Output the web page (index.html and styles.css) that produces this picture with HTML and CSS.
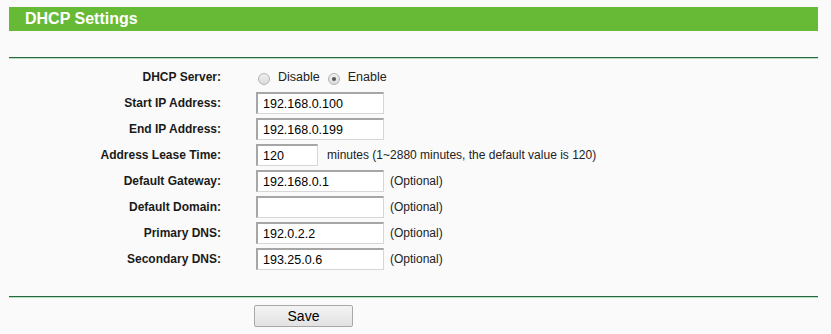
FILE: index.html
```html
<!DOCTYPE html>
<html lang="en">
<head>
    <meta charset="UTF-8">
    <title>DHCP Settings</title>
    <link rel="stylesheet" href="styles.css">
</head>
<body>
    <div class="page">
        <div class="title-bar">DHCP Settings</div>
        <div class="rule"></div>
        <div class="form">
            <div class="label">DHCP Server:</div>
            <div class="value radios">
                <label><input type="radio" name="dhcp"> Disable</label>
                <label><input type="radio" name="dhcp" checked> Enable</label>
            </div>

            <div class="label">Start IP Address:</div>
            <div class="value"><input class="text" type="text" value="192.168.0.100"></div>

            <div class="label">End IP Address:</div>
            <div class="value"><input class="text" type="text" value="192.168.0.199"></div>

            <div class="label">Address Lease Time:</div>
            <div class="value"><input class="text short" type="text" value="120"><span class="note wide">minutes (1~2880 minutes, the default value is 120)</span></div>

            <div class="label">Default Gateway:</div>
            <div class="value"><input class="text" type="text" value="192.168.0.1"><span class="note">(Optional)</span></div>

            <div class="label">Default Domain:</div>
            <div class="value"><input class="text" type="text" value=""><span class="note">(Optional)</span></div>

            <div class="label">Primary DNS:</div>
            <div class="value"><input class="text" type="text" value="192.0.2.2"><span class="note">(Optional)</span></div>

            <div class="label">Secondary DNS:</div>
            <div class="value"><input class="text" type="text" value="193.25.0.6"><span class="note">(Optional)</span></div>
        </div>
        <div class="rule bottom"></div>
        <div class="actions">
            <button class="btn">Save</button>
        </div>
    </div>
</body>
</html>
```

FILE: styles.css
```css
body {
    margin: 0;
    background: #fafafa;
    font-family: 'Liberation Sans', Arial, sans-serif;
    font-size: 12px;
    color: #000;
}
.page {
    padding: 7px 13px 0 9px;
}
.title-bar {
    height: 24px;
    line-height: 24px;
    background: #67ba35;
    color: #fff;
    font-size: 16px;
    font-weight: bold;
    padding-left: 16px;
}
.rule {
    margin-top: 26px;
    height: 1px;
    background: #24693f;
    border-bottom: 1px solid #b9ddc3;
}
.rule.bottom {
    margin-top: 24px;
}
.form {
    display: grid;
    grid-template-columns: 212px 1fr;
    column-gap: 35px;
    margin-top: 5px;
}
.label {
    height: 26px;
    line-height: 26px;
    text-align: right;
    font-weight: bold;
    color: #1a1a1a;
}
.value {
    height: 26px;
    display: flex;
    align-items: center;
}
.radios {
    padding-left: 2px;
}
.radios label {
    display: flex;
    align-items: center;
    margin-right: 8px;
    color: #222;
    font-size: 12.5px;
}
.radios input {
    appearance: none;
    width: 12px;
    height: 12px;
    margin: 3px 8px 0 0;
    border: 1px solid #b4b4b4;
    border-radius: 50%;
    background: linear-gradient(#f0f0f0, #dcdcdc);
    position: relative;
}
.radios input:checked::after {
    content: "";
    position: absolute;
    left: 3px;
    top: 3px;
    width: 4px;
    height: 4px;
    border-radius: 50%;
    background: #555;
}
.text {
    box-sizing: border-box;
    width: 128px;
    height: 22px;
    margin: 0;
    padding: 1px 4px 0 5px;
    border: 1px solid #d6d6d6;
    border-top: 2px solid #a6a6a6;
    border-left: 2px solid #a6a6a6;
    background: #fff;
    font-family: 'Liberation Sans', Arial, sans-serif;
    font-size: 12.5px;
    color: #000;
}
.text.short {
    width: 62px;
}
.note {
    margin-left: 6px;
    color: #222;
}
.note.wide {
    margin-left: 9px;
}
.actions {
    padding: 7px 0 0 245px;
}
.btn {
    width: 99px;
    height: 22px;
    border: 1px solid #a8a8a8;
    border-radius: 2px;
    background: linear-gradient(#f4f4f4, #e2e2e2);
    font-family: 'Liberation Sans', Arial, sans-serif;
    font-size: 14px;
    color: #000;
    padding: 0;
}
```
